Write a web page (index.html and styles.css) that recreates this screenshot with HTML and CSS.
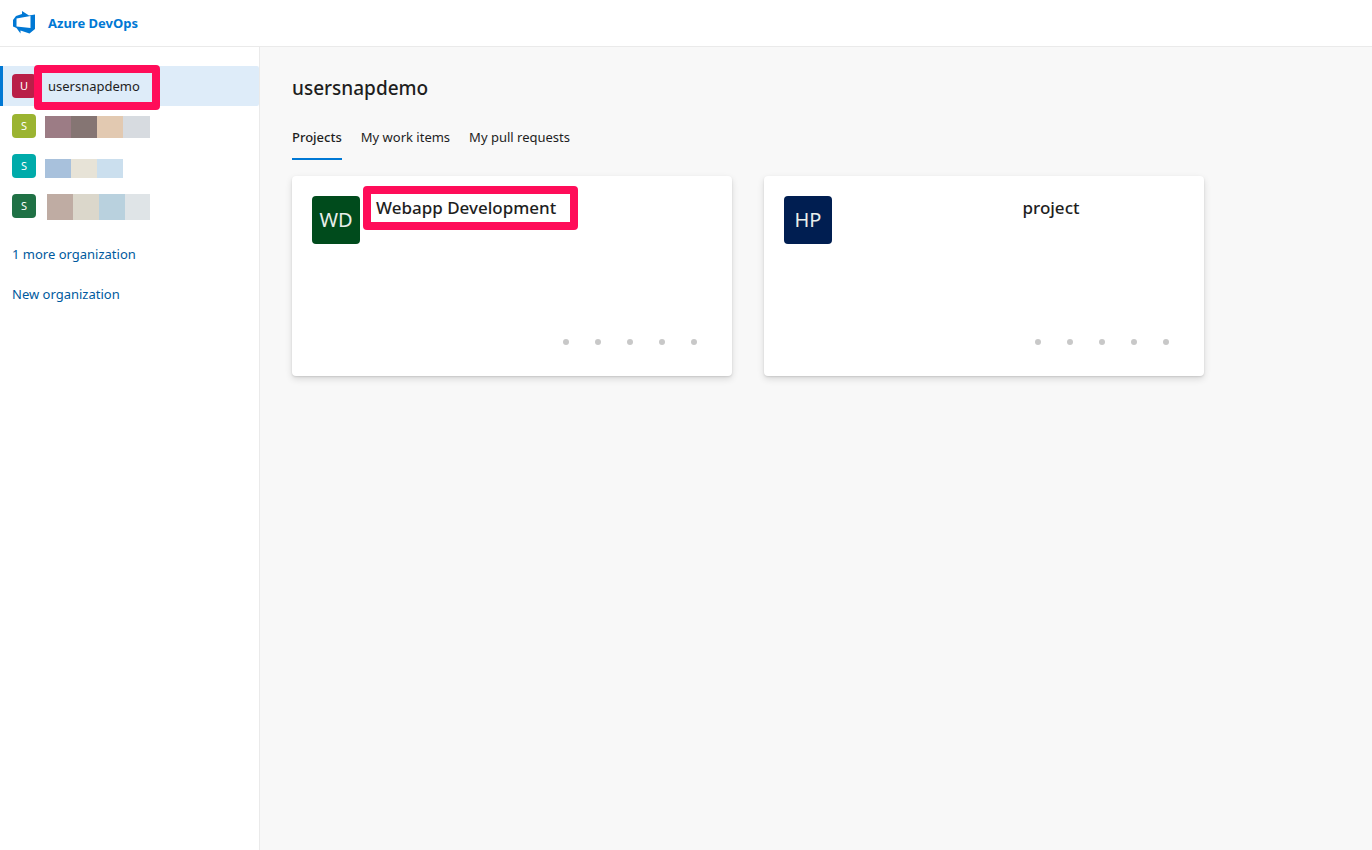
FILE: index.html
```html
<!DOCTYPE html>
<html lang="en">
<head>
  <meta charset="UTF-8">
  <title>Projects - Home</title>
  <meta name="viewport" content="width=device-width, initial-scale=1">
  <link rel="stylesheet" href="styles.css">
</head>
<body>
  <header class="topbar">
    <a href="#" class="brand">
      <svg class="logo" viewBox="0 0 24 24" aria-hidden="true">
        <path fill-rule="evenodd" d="M1 9L4 5L10 3V0L17 4.500L23 3.500V18L17.500 22.500L8.500 19.500V22.500L4.500 17L1 15.500zM4.500 7.500V15.500L18.500 17V5z"/>
      </svg>
      <span>Azure DevOps</span>
    </a>
  </header>

  <div class="layout">
    <nav class="sidebar" aria-label="Organizations">
      <ul class="orgs">
        <li>
          <a href="#" class="org active">
            <span class="avatar crimson">U</span>
            <span class="marked org-mark">usersnapdemo</span>
          </a>
        </li>
        <li>
          <a href="#" class="org">
            <span class="avatar lime">S</span>
            <span class="masked mask-a"></span>
          </a>
        </li>
        <li>
          <a href="#" class="org">
            <span class="avatar teal">S</span>
            <span class="masked mask-b"></span>
          </a>
        </li>
        <li>
          <a href="#" class="org">
            <span class="avatar green">S</span>
            <span class="masked mask-c"></span>
          </a>
        </li>
      </ul>
      <a href="#" class="side-link">1 more organization</a>
      <a href="#" class="side-link">New organization</a>
    </nav>

    <main class="content">
      <h1>usersnapdemo</h1>
      <div class="tabs" role="tablist">
        <button type="button" class="tab selected" role="tab" aria-selected="true">Projects</button>
        <button type="button" class="tab" role="tab" aria-selected="false">My work items</button>
        <button type="button" class="tab" role="tab" aria-selected="false">My pull requests</button>
      </div>

      <div class="cards">
        <article class="card">
          <div class="card-head">
            <span class="badge forest">WD</span>
            <h2 class="marked card-mark">Webapp Development</h2>
          </div>
          <div class="actions">
            <button type="button" aria-label="Boards"></button>
            <button type="button" aria-label="Repos"></button>
            <button type="button" aria-label="Pipelines"></button>
            <button type="button" aria-label="Test Plans"></button>
            <button type="button" aria-label="Artifacts"></button>
          </div>
        </article>

        <article class="card">
          <div class="card-head">
            <span class="badge navy">HP</span>
            <h2 class="centered">project</h2>
          </div>
          <div class="actions">
            <button type="button" aria-label="Boards"></button>
            <button type="button" aria-label="Repos"></button>
            <button type="button" aria-label="Pipelines"></button>
            <button type="button" aria-label="Test Plans"></button>
            <button type="button" aria-label="Artifacts"></button>
          </div>
        </article>
      </div>
    </main>
  </div>
</body>
</html>
```
FILE: styles.css
```css
* {
  box-sizing: border-box;
}
body {
  margin: 0;
  min-height: 100vh;
  display: flex;
  flex-direction: column;
  font-family: "Segoe UI", "Noto Sans", sans-serif;
  font-size: 13px;
  line-height: 20px;
  color: #1e1e1e;
  background: #f8f8f8;
}
a {
  text-decoration: none;
}
h1, h2 {
  margin: 0;
  font-weight: 500;
}

/* top bar */
.topbar {
  height: 47px;
  padding: 0 12px;
  display: flex;
  align-items: center;
  background: #fff;
  border-bottom: 1px solid #eaeaea;
}
.brand {
  display: flex;
  align-items: center;
  gap: 12px;
  font-weight: 700;
  color: #0078d4;
}
.logo {
  width: 24px;
  height: 24px;
  fill: #0078d4;
}

.layout {
  flex: 1;
  display: flex;
}

/* sidebar */
.sidebar {
  width: 260px;
  flex-shrink: 0;
  padding-top: 19px;
  background: #fff;
  border-right: 1px solid #eaeaea;
}
.orgs {
  list-style: none;
  margin: 0 0 8px;
  padding: 0;
}
.org {
  height: 40px;
  display: flex;
  align-items: center;
  border-left: 3px solid transparent;
  padding-left: 9px;
  color: #1e1e1e;
}
.org.active {
  background: #deecf9;
  border-left-color: #0078d4;
  border-radius: 0 2px 2px 0;
}
.avatar {
  width: 24px;
  height: 24px;
  border-radius: 4px;
  color: #fff;
  font-size: 11px;
  line-height: 24px;
  text-align: center;
}
.crimson { background: #b91f48; }
.lime { background: #9bb431; }
.teal { background: #00abaa; }
.green { background: #1f7145; }

.side-link {
  display: block;
  padding: 10px 12px;
  color: #005a9e;
}

/* blurred out organization names */
.masked {
  margin-left: 9px;
  margin-top: 2px;
}
.mask-a {
  width: 105px;
  height: 22px;
  background: linear-gradient(90deg, #9c7c85 26px, #857573 26px 52px, #e2c9b1 52px 78px, #d7dbe0 78px);
}
.mask-b {
  width: 78px;
  height: 19px;
  margin-top: 5px;
  background: linear-gradient(90deg, #a8c1dc 26px, #e7e3d7 26px 52px, #cbdfee 52px);
}
.mask-c {
  width: 103px;
  height: 26px;
  margin-left: 11px;
  background: linear-gradient(90deg, #bfaca3 26px, #dbd7cb 26px 52px, #b9d1de 52px 78px, #dfe4e7 78px);
}

/* pink callout frames */
.marked {
  position: relative;
}
.marked::after {
  content: "";
  position: absolute;
  border: 8px solid #ff0d59;
  border-radius: 4px;
}
.org-mark {
  margin-left: 12px;
}
.org-mark::after {
  inset: -11px -20px -14px -14px;
}
.card-mark::after {
  inset: -10px -22px -10px -13px;
}

/* content */
.content {
  flex: 1;
  padding: 25px 32px;
}
h1 {
  font-size: 19px;
  line-height: 32px;
}
.tabs {
  display: flex;
  gap: 19px;
  margin: 12px 0 16px;
}
.tab {
  height: 44px;
  padding: 0;
  border: 0;
  border-bottom: 2px solid transparent;
  background: none;
  font: inherit;
  color: inherit;
  cursor: pointer;
}
.tab.selected {
  font-weight: 500;
  border-bottom-color: #0078d4;
}

.cards {
  display: grid;
  grid-template-columns: repeat(auto-fill, 440px);
  gap: 32px;
}
.card {
  min-height: 200px;
  padding: 20px 22px 18px 20px;
  display: flex;
  flex-direction: column;
  justify-content: space-between;
  background: #fff;
  border-radius: 4px;
  box-shadow: 0 3px 7px rgba(0,0,0,0.13), 0 1px 2px rgba(0,0,0,0.11);
}
.card-head {
  display: flex;
  align-items: flex-start;
  gap: 16px;
}
.badge {
  width: 48px;
  height: 48px;
  border-radius: 4px;
  color: #e8eeea;
  font-size: 20px;
  line-height: 48px;
  text-align: center;
}
.forest { background: #004b1c; }
.navy { background: #001e51; }
h2 {
  font-size: 17px;
  line-height: 24px;
}
.centered {
  flex: 1;
  text-align: center;
  padding-left: 72px;
}
.actions {
  display: flex;
  justify-content: flex-end;
}
.actions button {
  width: 32px;
  height: 32px;
  padding: 0;
  border: 0;
  background: none;
  cursor: pointer;
}
.actions button::before {
  content: "";
  display: block;
  width: 6px;
  height: 6px;
  margin: auto;
  border-radius: 50%;
  background: #c8c8c8;
}
```
